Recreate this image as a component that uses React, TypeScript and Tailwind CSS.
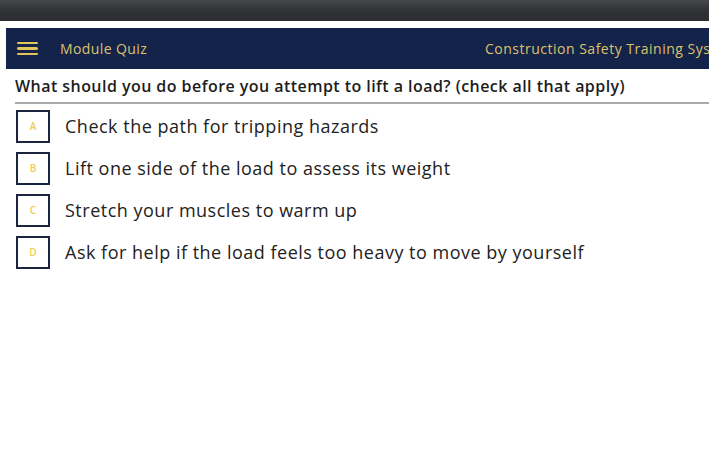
const OPTIONS = [
  { letter: 'A', text: 'Check the path for tripping hazards' },
  { letter: 'B', text: 'Lift one side of the load to assess its weight' },
  { letter: 'C', text: 'Stretch your muscles to warm up' },
  { letter: 'D', text: 'Ask for help if the load feels too heavy to move by yourself' },
];

export default function App() {
  return (
    <div
      className="w-[709px] h-[466px] overflow-hidden bg-white flex flex-col"
      style={{ fontFamily: '"Open Sans", "Liberation Sans", sans-serif' }}
    >
      {/* browser chrome strip */}
      <div className="h-[21px] shrink-0 bg-gradient-to-b from-[#45474a] via-[#303235] to-[#2b2d30]" />

      <div className="pt-[7px] pl-[6px]">
        <header className="h-[41px] bg-[#14234a] flex items-center pl-[11px] overflow-hidden whitespace-nowrap">
          <div className="flex flex-col gap-[3px] w-[21px] shrink-0">
            <span className="h-[2.5px] bg-[#e3c45a] rounded-full" />
            <span className="h-[2.5px] bg-[#e3c45a] rounded-full" />
            <span className="h-[2.5px] bg-[#e3c45a] rounded-full" />
          </div>
          <span className="ml-[22px] w-[425px] shrink-0 text-[14px] tracking-[0.4px] text-[#dcc26c]">
            Module Quiz
          </span>
          <span className="shrink-0 text-[14px] tracking-[0.5px] text-[#dcc26c]">
            Construction Safety Training System
          </span>
        </header>
      </div>

      <div className="pl-[15px]">
        <h1 className="h-[35px] pt-[1px] flex items-center text-[16px] tracking-[0.45px] font-semibold text-[#1d1d1d] border-b-2 border-[#a9abae] whitespace-nowrap">
          What should you do before you attempt to lift a load? (check all that apply)
        </h1>

        <ul className="pt-[6px] flex flex-col gap-[9px]">
          {OPTIONS.map(o => (
            <li key={o.letter} className="flex items-center">
              <span className="w-[34px] h-[33px] ml-[1px] border-[2.5px] border-[#1b2540] flex items-center justify-center text-[10px] font-semibold text-[#eecb5a] shrink-0">
                {o.letter}
              </span>
              <span className="ml-[15px] text-[18px] tracking-[0.5px] text-[#222]">{o.text}</span>
            </li>
          ))}
        </ul>
      </div>
    </div>
  );
}
